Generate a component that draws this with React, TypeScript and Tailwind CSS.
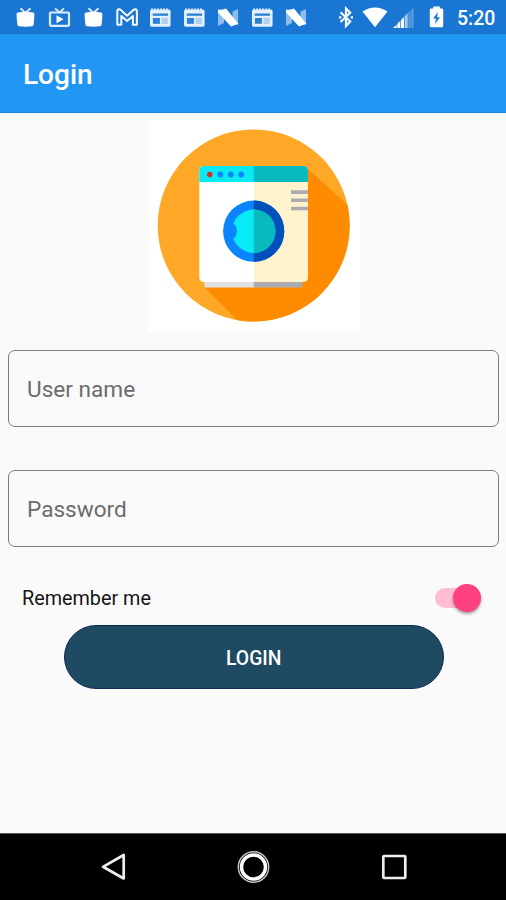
import React from "react";

const icon = "block h-[34px] w-6 shrink-0";

function TvSolid() {
  return (
    <svg className={icon} viewBox="0 0 24 34" fill="none">
      <path d="M7.500 8.300 12.500 13l5-4.700" stroke="#dcebfa" strokeWidth="1.900" />
      <path d="M5 12.400q7.500-1.300 15 0 1.400.2 1.400 1.600 0 5-.8 10.500-.2 1.600-1.600 1.800-6.500.9-13 0-1.400-.2-1.600-1.800-.8-5.500-.8-10.500 0-1.400 1.400-1.600Z" fill="#fff" />
    </svg>
  );
}

function TvPlay() {
  return (
    <svg className={icon} viewBox="0 0 24 34" fill="none">
      <path d="m8 8.300 4.500 4.200L17 8.300" stroke="#dcebfa" strokeWidth="1.800" />
      <rect x="3" y="12.500" width="19" height="13.300" rx="1" stroke="#dcebfa" strokeWidth="2.200" />
      <path d="m9.500 15.200 7 4-7 4Z" fill="#fff" />
    </svg>
  );
}

function Mail() {
  return (
    <svg className={icon} viewBox="0 0 24 34" fill="none">
      <path
        d="M2.300 24.800V11.200q0-1.900 1.800-1.900 1 0 2 1l6 5.400 6-5.400q1-1 2-1 1.800 0 1.800 1.900v13.600h-4V15.900l-5.800 5.100-5.800-5.100v8.900Z"
        stroke="#f4f9ff"
        strokeWidth="2"
        strokeLinejoin="round"
      />
    </svg>
  );
}

function News() {
  return (
    <svg className={icon} viewBox="0 0 24 34" fill="none">
      <path d="M4 8.200v2M7 8.200v2M10 8.200v2M13 8.200v2M16 8.200v2M19 8.200v2" stroke="#dcebfa" strokeWidth="1.400" />
      <rect x="2" y="9.600" width="20.600" height="17.200" rx="1.800" fill="#e4effc" />
      <path d="M4.700 13.500H20v2.300H4.700Z" fill="#2b81d4" />
      <path d="M4.900 18h7v5.800h-7Z" fill="#2b81d4" />
      <path d="M13.500 17.800h6.300v6.200h-6.300Z" fill="#b3cff0" />
    </svg>
  );
}

function Nougat() {
  return (
    <svg className={icon} viewBox="0 0 24 34">
      <path d="M2 12v14l6-3V17Z" fill="#8fbcec" />
      <path d="m16.500 11.500 5.500-2.600v15.600l-2-.5-3.500-6Z" fill="#8fbcec" />
      <path d="M2 9.600Q6 10.200 10 8.400L22.500 24q-3.500.7-7.500 2.500L2 12.500Z" fill="#fff" />
    </svg>
  );
}

function StatusBar() {
  return (
    <div className="flex h-[34px] shrink-0 items-center bg-[#1976d2] pl-[8.500px]">
      <div className="grid w-[304px] grid-cols-9 justify-items-center">
        <TvSolid />
        <TvPlay />
        <TvSolid />
        <Mail />
        <News />
        <News />
        <Nougat />
        <News />
        <Nougat />
      </div>
      <svg className="ml-[25px] block h-[34px] w-4 shrink-0" viewBox="0 0 16 34" fill="none">
        <path d="m2.500 12.300 9.700 9.200L8 26V8.500l4.200 4.300-9.700 9.200" stroke="#f2f8ff" strokeWidth="2.200" />
        <path d="M1 16.200h2.300v2.300H1ZM12.700 16.200H15v2.300h-2.300Z" fill="#f2f8ff" />
      </svg>
      <svg className="ml-[8px] block h-[34px] w-[26px] shrink-0" viewBox="0 0 26 34">
        <path d="M.5 11.500Q13 3.700 25.500 11.500L13 27.300Z" fill="#fff" />
      </svg>
      <svg className="ml-[4px] block h-[34px] w-[23px] shrink-0" viewBox="0 0 23 34">
        <path d="M1 28 4.600 24.700V28Z" fill="#fff" />
        <path d="M5.300 28v-4.200l3-3V28ZM9 28v-7.900l3-3V28Z" fill="#fff" />
        <path d="M12.700 28V16.300l3-3V28Z" fill="#a8ccf0" />
        <path d="M16.400 28V12.600l2.200-2.200V28ZM19.300 28V9.700L21.500 7.500V28Z" fill="#5a9fe0" />
      </svg>
      <svg className="ml-[14.500px] block h-[34px] w-[15px] shrink-0" viewBox="0 0 15 34">
        <path d="M4.200 6.500h6.600v2H13q1.200 0 1.200 1.200v16.300q0 1.300-1.200 1.300H2q-1.200 0-1.200-1.300V9.700q0-1.200 1.200-1.200h2.200Z" fill="#fff" />
        <path d="m9 12-5 6.500h2.900L6 24l5-6.700H8.100Z" fill="#1976d2" />
      </svg>
      <span className="ml-[13px] mt-[4px] text-[19.500px] font-medium leading-none text-white">5:20</span>
    </div>
  );
}

function WasherLogo() {
  return (
    <svg className="block size-[212px]" viewBox="148 120 212 212">
      <defs>
        <clipPath id="disc">
          <circle cx="253.700" cy="225.500" r="96" />
        </clipPath>
        <clipPath id="right">
          <path d="M253.800 150h80v150h-80Z" />
        </clipPath>
        <clipPath id="body">
          <rect x="199.300" y="166" width="108.700" height="116" rx="4.500" />
        </clipPath>
      </defs>
      <circle cx="253.700" cy="225.500" r="96" fill="#ffa827" />
      <path clipPath="url(#disc)" d="m306 167 47 43v120H247l-43-43Z" fill="#ff8c00" />
      <path d="M204.500 280h50v7.500h-50Z" fill="#e1e1e4" />
      <path d="M253.800 280h48.500v7.500h-48.500Z" fill="#acabb1" />
      <g clipPath="url(#body)">
        <path d="M199 166h55v117h-55Z" fill="#fff" />
        <path d="M253.800 166H309v117h-55.200Z" fill="#fff3cd" />
        <path d="M199 166h55v16h-55Z" fill="#08eaf4" />
        <path d="M253.800 166H309v16h-55.200Z" fill="#08babe" />
        <path d="M291 190.300h18v3.600h-18ZM291 198.500h18v3.600h-18ZM291 206.700h18v3.600h-18Z" fill="#acabb1" />
      </g>
      <circle cx="209.700" cy="174.500" r="2.700" fill="#d92a1c" />
      <circle cx="220.300" cy="174.500" r="2.900" fill="#0b87f5" />
      <circle cx="230.800" cy="174.500" r="2.900" fill="#0b87f5" />
      <circle cx="241.300" cy="174.500" r="2.900" fill="#0b87f5" />
      <circle cx="253.700" cy="231.200" r="30.600" fill="#0a84ff" />
      <circle cx="253.700" cy="231.200" r="30.600" fill="#0350ba" clipPath="url(#right)" />
      <circle cx="253.700" cy="231.200" r="21.700" fill="#08eaf4" />
      <circle cx="253.700" cy="231.200" r="21.700" fill="#08babe" clipPath="url(#right)" />
      <path d="M231 222.500q2 2.300 4.300 2.300 3 6.200 0 12.500-2.300.2-4.300 2.500Z" fill="#0a84ff" />
    </svg>
  );
}

function Field({ label, type }: { label: string; type: string }) {
  return (
    <input
      type={type}
      placeholder={label}
      aria-label={label}
      className="block h-[77px] w-full rounded-[7px] border-[1.500px] border-[#7c7c7c] bg-transparent px-[18px] pt-px text-[22.600px] text-[#333] outline-none placeholder:text-[#6c6c6c]"
    />
  );
}

export default function App() {
  return (
    <div className="flex h-[900px] w-[506px] flex-col overflow-hidden bg-[#fafafa] font-[Roboto,sans-serif]">
      <StatusBar />
      <header className="flex h-[79px] shrink-0 items-center border-b border-[#1683df] bg-[#2196f3] pl-[23px]">
        <h1 className="mt-[4px] text-[28px] font-medium leading-none text-white">Login</h1>
      </header>
      <main className="flex grow flex-col pt-[7px]">
        <div className="ml-[148px] w-[212px] bg-white">
          <WasherLogo />
        </div>
        <div className="mt-[18px] flex flex-col gap-[43px] pl-[8px] pr-[7px]">
          <Field label="User name" type="text" />
          <Field label="Password" type="password" />
        </div>
        <div className="mt-[36px] flex h-[30px] items-center justify-between pl-[22px] pr-[25px]">
          <span className="mt-px text-[19.800px] leading-none text-[#161616]">Remember me</span>
          <div className="flex h-5 w-[46px] items-center justify-end rounded-full bg-[#ffbdd3]">
            <div className="size-7 shrink-0 rounded-full bg-[#ff4081] shadow-[0_2px_3px_rgba(0,0,0,0.35)]" />
          </div>
        </div>
        <button className="ml-[64px] mt-[12px] h-[64px] w-[379.500px] rounded-full border border-[#0d2a58] bg-[#1e4b61] pt-[5px] text-[19.300px] font-medium text-white">
          LOGIN
        </button>
      </main>
      <nav className="flex h-[67px] shrink-0 items-center border-t border-[#555] bg-black pl-[101px]">
        <svg className="block size-8" viewBox="0 0 32 32" fill="none">
          <path d="M22.700 4v23.500L2 15.800Z" stroke="#eee" strokeWidth="2.700" strokeLinejoin="round" />
        </svg>
        <svg className="ml-[104px] block size-[33px]" viewBox="0 0 33 33" fill="none">
          <circle cx="16.500" cy="16" r="15.200" stroke="#c4c4c4" strokeWidth="1.500" />
          <circle cx="16.500" cy="16" r="12" stroke="#fff" strokeWidth="3.400" />
        </svg>
        <svg className="ml-[108px] block size-8" viewBox="0 0 32 32" fill="none">
          <rect x="5.300" y="5" width="22" height="22" rx=".8" stroke="#eee" strokeWidth="2.700" />
        </svg>
      </nav>
    </div>
  );
}
